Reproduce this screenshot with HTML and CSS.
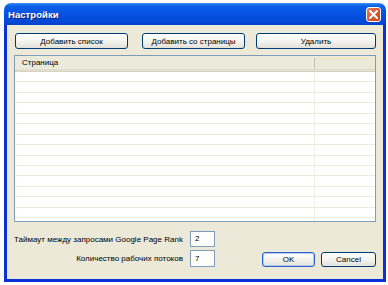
FILE: index.html
```html
<!DOCTYPE html>
<html lang="ru">
<head>
<meta charset="utf-8">
<title>Настройки</title>
<link rel="stylesheet" href="styles.css">
</head>
<body>
<div class="window">
  <div class="titlebar">
    <span class="title">Настройки</span>
    <span class="close"><svg width="9" height="9" viewBox="0 0 9 9"><path d="M1 1L8 8M8 1L1 8" stroke="#fff" stroke-width="2" stroke-linecap="square"/></svg></span>
  </div>
  <div class="content">
    <div class="toolbar">
      <button class="btn b1">Добавить список</button>
      <button class="btn b2">Добавить со страницы</button>
      <button class="btn b3">Удалить</button>
    </div>
    <div class="list">
      <div class="list-head">
        <div class="col-main">Страница</div>
        <div class="col-rest"></div>
      </div>
      <div class="list-body">
        <div class="col-line"></div>
      </div>
    </div>
    <div class="bottom">
      <div class="fields">
        <label class="lbl">Таймаут между запросами Google Page Rank</label>
        <div class="input">2</div>
        <label class="lbl">Количество рабочих потоков</label>
        <div class="input">7</div>
      </div>
      <div class="actions">
        <button class="btn ok">OK</button>
        <button class="btn cancel">Cancel</button>
      </div>
    </div>
  </div>
</div>
</body>
</html>
```
FILE: styles.css
```css
html, body {
  margin: 0;
  padding: 0;
  background: #fff;
}
body {
  font-family: "Liberation Sans", Arial, sans-serif;
  font-size: 8px;
  color: #000;
}
.window {
  margin: 3px 0 0 4px;
  width: 382px;
  height: 279px;
  display: flex;
  flex-direction: column;
}
.titlebar {
  height: 22px;
  border-radius: 7px 7px 0 0;
  background: linear-gradient(to bottom, #3d8cf6 0px, #0a5fe8 3px, #0551e0 12px, #0447d6 19px, #0342c7 22px);
  display: flex;
  align-items: center;
  justify-content: space-between;
  padding: 0 5px 0 4px;
  box-sizing: border-box;
}
.title {
  color: #fff;
  font-weight: bold;
  font-size: 9.6px;
  text-shadow: 1px 1px 0 #0a1e6e;
}
.close {
  width: 15px;
  height: 15px;
  box-sizing: border-box;
  border: 1px solid #fff;
  border-radius: 3px;
  background: linear-gradient(135deg, #e8825f 0%, #dc5a32 45%, #c8451e 100%);
  display: flex;
  align-items: center;
  justify-content: center;
}
.content {
  flex: 1;
  background: #ece9d8;
  border: 3px solid #0831d9;
  border-top: none;
  padding: 8px 7px 8px 7px;
  display: flex;
  flex-direction: column;
  box-sizing: border-box;
}
.btn {
  font-family: inherit;
  font-size: 8px;
  color: #000;
  height: 16px;
  padding: 0;
  border: 1px solid #003c74;
  border-radius: 3px;
  background: linear-gradient(to bottom, #ffffff 0%, #f4f4f0 50%, #e3e1d8 100%);
  box-sizing: border-box;
  margin: 0;
}
.toolbar {
  display: flex;
  margin-left: 1px;
}
.b1 { width: 113px; }
.b2 { width: 103px; margin-left: 14px; }
.b3 { width: 120px; margin-left: 11px; }
.list {
  margin-top: 6px;
  height: 167px;
  border: 1px solid #7f9db9;
  background: #fff;
  display: flex;
  flex-direction: column;
  box-sizing: border-box;
}
.list-head {
  height: 15px;
  display: flex;
  background: #ebeadb;
  border-bottom: 1px solid #d6d2c2;
  box-shadow: inset 0 -2px 0 #e2decd;
  flex-shrink: 0;
}
.col-main {
  width: 300px;
  box-sizing: border-box;
  padding-left: 7px;
  border-right: 1px solid #c7c5b2;
  margin: 2px 0 2px;
  line-height: 10px;
}
.col-rest {
  flex: 1;
  border-top: 1px dotted #eadfa5;
  margin: 2px 6px 0 0;
}
.list-body {
  flex: 1;
  position: relative;
  background: repeating-linear-gradient(to bottom, #fff 0, #fff 9.44px, #ebebd9 9.44px, #ebebd9 10.44px);
}
.col-line {
  position: absolute;
  left: 299px;
  top: 0;
  bottom: 0;
  width: 1px;
  background: #efefe4;
}
.bottom {
  display: flex;
  justify-content: space-between;
  align-items: flex-end;
  margin-top: 9px;
}
.fields {
  display: grid;
  grid-template-columns: auto 25px;
  column-gap: 7px;
  row-gap: 3px;
  align-items: center;
}
.lbl {
  justify-self: end;
}
.input {
  height: 16px;
  border: 1px solid #7f9db9;
  background: #fff;
  box-sizing: border-box;
  padding-left: 4px;
  line-height: 14px;
}
.input + .lbl + .input {
  height: 17px;
  line-height: 15px;
}
.actions {
  display: flex;
  gap: 6px;
}
.ok { width: 53px; height: 15px; border-color: #2c62c8; box-shadow: inset 0 0 0 1px #b4c8f0; }
.cancel { width: 55px; height: 15px; }
```
